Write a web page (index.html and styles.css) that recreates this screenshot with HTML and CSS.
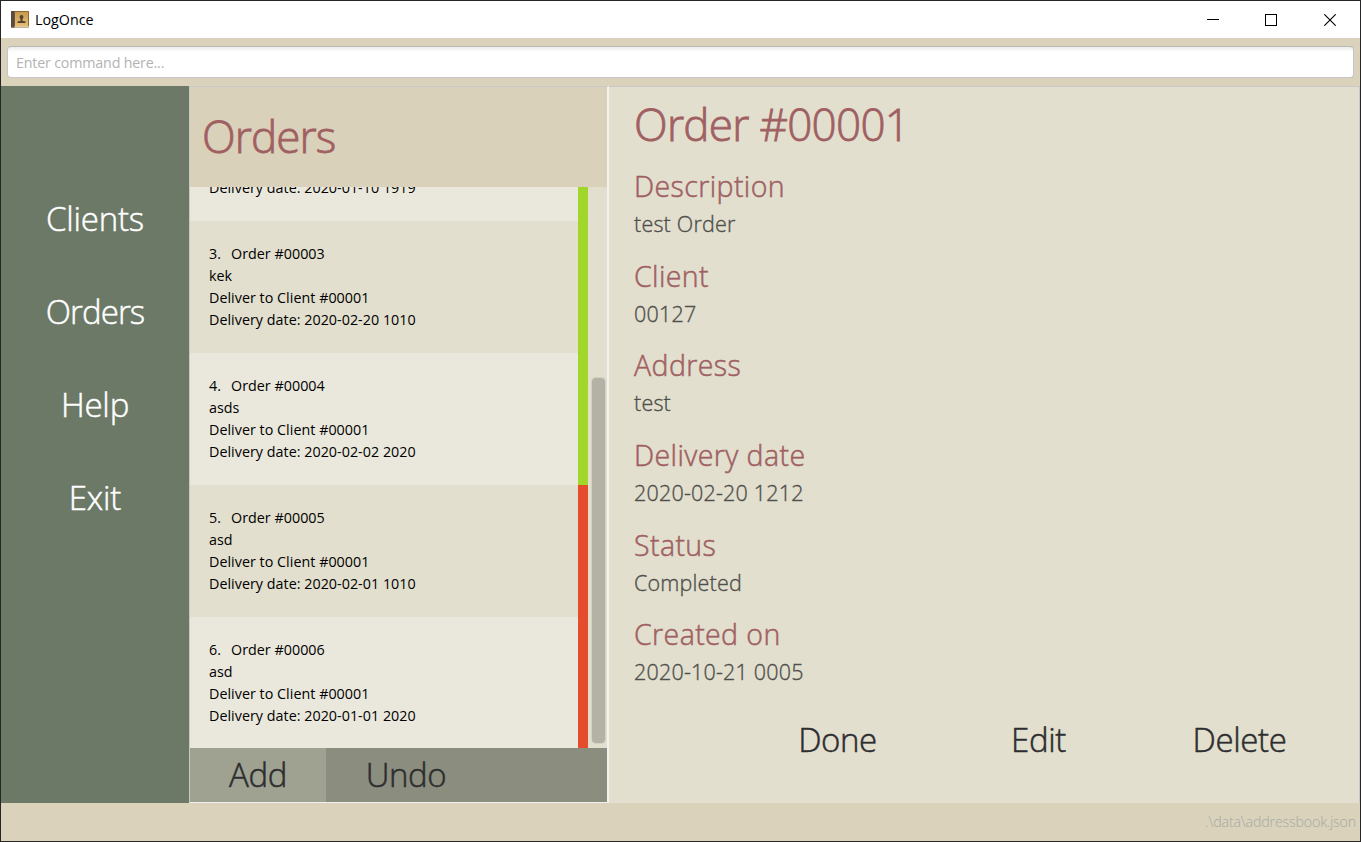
FILE: index.html
```
<!DOCTYPE html>
<html lang="en">
<head>
<meta charset="utf-8">
<title>LogOnce</title>
<link rel="stylesheet" href="styles.css">
</head>
<body>
<div class="window">
  <header class="titlebar">
    <svg class="app-icon" viewBox="0 0 18 17">
      <defs><linearGradient id="cover" x1="0" y1="0" x2="0" y2="1"><stop offset="0" stop-color="#c99a4d"/><stop offset="1" stop-color="#e6bd74"/></linearGradient></defs>
      <rect x="0" y="0" width="18" height="16.5" rx=".6" fill="#8e6832"/>
      <rect x="0" y="0" width="3.6" height="16.5" fill="#5a4a44"/>
      <rect x="4" y="1" width="13" height="14" fill="url(#cover)"/>
      <rect x="3.6" y="15.2" width="14.4" height=".8" fill="#efe0bd"/>
      <path d="M10.5 4a1.900 1.900 0 0 1 1.900 2c0 1-.8 1.500-.9 2.200v1.500l3 .8v1.500h-8v-1.500l3-.8v-1.500c-.1-.7-.9-1.200-.9-2.200A1.900 1.900 0 0 1 10.500 4z" fill="#554331"/>
    </svg>
    <span class="app-name">LogOnce</span>
    <div class="controls">
      <svg viewBox="0 0 12 12"><path d="M0 5.500H12" /></svg>
      <svg viewBox="0 0 12 12"><path d="M.5 .5H11.500V11.500H.5z"/></svg>
      <svg class="smooth" viewBox="0 0 12 12"><path d="M.3 .3L11.700 11.700M11.700 .3L.3 11.700"/></svg>
    </div>
  </header>
  <div class="command"><input class="command-input" type="text" placeholder="Enter command here..."></div>
  <main class="body">
    <nav class="sidebar">
      <a class="nav-item">Clients</a>
      <a class="nav-item orders-link">Orders</a>
      <a class="nav-item">Help</a>
      <a class="nav-item">Exit</a>
    </nav>
    <section class="list-panel">
      <h1 class="list-title">Orders</h1>
      <div class="list-view">
        <ul class="orders">
          <li class="order done partial"><p>Delivery date: 2020-01-10 1919</p></li>
          <li class="order done"><p><span class="num">3.</span>Order #00003</p><p>kek</p><p>Deliver to Client #00001</p><p>Delivery date: 2020-02-20 1010</p></li>
          <li class="order done"><p><span class="num">4.</span>Order #00004</p><p>asds</p><p>Deliver to Client #00001</p><p>Delivery date: 2020-02-02 2020</p></li>
          <li class="order late"><p><span class="num">5.</span>Order #00005</p><p>asd</p><p>Deliver to Client #00001</p><p>Delivery date: 2020-02-01 1010</p></li>
          <li class="order late"><p><span class="num">6.</span>Order #00006</p><p>asd</p><p>Deliver to Client #00001</p><p>Delivery date: 2020-01-01 2020</p></li>
        </ul>
        <div class="scrollbar"><div class="thumb"></div></div>
      </div>
      <div class="list-actions"><button class="btn add">Add</button><button class="btn undo">Undo</button></div>
    </section>
    <section class="detail">
      <h2 class="detail-title">Order #00001</h2>
      <dl class="fields">
        <div class="field"><dt>Description</dt><dd>test Order</dd></div>
        <div class="field"><dt>Client</dt><dd>00127</dd></div>
        <div class="field"><dt>Address</dt><dd>test</dd></div>
        <div class="field"><dt>Delivery date</dt><dd>2020-02-20 1212</dd></div>
        <div class="field"><dt>Status</dt><dd>Completed</dd></div>
        <div class="field"><dt>Created on</dt><dd>2020-10-21 0005</dd></div>
      </dl>
      <div class="detail-actions"><button class="btn">Done</button><button class="btn">Edit</button><button class="btn">Delete</button></div>
    </section>
  </main>
  <footer class="status">.\data\addressbook.json</footer>
</div>
</body>
</html>
```

FILE: styles.css
```
* { box-sizing: border-box; margin: 0; padding: 0; }
body { font-family: "Open Sans", "Noto Sans", sans-serif; overflow: hidden; }
.window { width: 1361px; height: 842px; border: 1px solid #262628; display: flex; flex-direction: column; background: #dad2ba; }
.titlebar { height: 37px; background: #fff; display: flex; align-items: center; padding-left: 10px; flex: none; }
.app-icon { width: 18px; height: 17px; }
.app-name { margin-left: 6px; font-size: 14.3px; letter-spacing: 0; color: #000; }
.controls { margin-left: auto; display: flex; padding-right: 24px; }
.controls svg { width: 12px; height: 12px; margin-left: 46px; fill: none; stroke: #000; stroke-width: 1; shape-rendering: crispEdges; }
.controls .smooth { margin-left: 47px; shape-rendering: auto; stroke-width: 1.1; }
.command { height: 48px; padding: 8px 6px 8px; flex: none; }
.command-input { display: block; width: 100%; height: 32px; border: 1px solid #c6c6c6; border-top-color: #b9b9b9; border-radius: 4px; background: linear-gradient(#ececec, #fff 5px); padding: 0 8px 0 8px; font: 14.3px "Open Sans", sans-serif; letter-spacing: -.2px; outline: 0; }
.command-input::placeholder { color: #b3b3b3; }
.body { display: flex; height: 717px; flex: none; }
.sidebar { width: 188px; background: #6c7967; display: flex; flex-direction: column; align-items: center; padding-top: 86px; flex: none; }
.nav-item { height: 93px; line-height: 93px; font-size: 33px; font-weight: 300; letter-spacing: -.2px; color: #fff; -webkit-text-stroke: .45px; }
.orders-link { letter-spacing: -.9px; }
.list-panel { width: 420px; border: 1px solid #c8c8c8; border-right: 2px solid #f2f2f2; border-bottom-color: #f0f0f0; display: flex; flex-direction: column; flex: none; background: #e2dfce; }
.list-title { height: 100px; line-height: 99px; padding-left: 12px; background: #dad1ba; color: #a06062; font-size: 44px; font-weight: 300; letter-spacing: -.9px; -webkit-text-stroke: .8px; flex: none; }
.list-view { height: 561px; overflow: hidden; display: flex; flex: none; }
.orders { list-style: none; width: 398px; margin-top: -10px; }
.order { height: 132px; padding: 22px 19px; background: #eae8dc; border-right: 10px solid; font-size: 14.3px; line-height: 22px; color: #000; letter-spacing: .03px; }
.order.partial { height: 44px; padding-top: 0; }
.order:nth-child(even) { background: #e2dfce; }
.order.done { border-right-color: #a1d62b; }
.order.late { border-right-color: #e54c2e; }
.num { display: inline-block; width: 22px; }
.scrollbar { flex: 1; padding: 191px 2px 0 4px; }
.thumb { height: 365px; width: 13px; background: #b4b1a5; border-radius: 4px; box-shadow: 0 0 0 1px #d4d1c1; }
.list-actions { flex: 1; display: flex; background: #8b8e7e; }
.btn { border: 0; background: none; font: 300 33px "Open Sans", sans-serif; letter-spacing: -.4px; color: #2d2d30; -webkit-text-stroke: .5px; }
.list-actions .btn { line-height: 54px; }
.add { width: 136px; }
.list-actions .add { background: #9fa290; }
.undo { width: 160px; }
.detail { flex: 1; border-top: 1px solid #c8c8c8; border-right: 1px solid #c8c8c8; background: #e2dfce; padding-left: 25px; display: flex; flex-direction: column; }
.detail-title { height: 78px; line-height: 75px; font-size: 44px; font-weight: 300; letter-spacing: -.7px; color: #a06062; -webkit-text-stroke: .8px; }
.fields { height: 539px; flex: none; }
.field { height: 89.7px; }
dt { height: 43px; line-height: 43px; font-size: 28.500px; font-weight: 300; letter-spacing: .4px; color: #a06062; -webkit-text-stroke: .5px; }
dd { height: 32px; line-height: 32px; font-size: 21.500px; font-weight: 300; letter-spacing: .2px; color: #4f4f4c; -webkit-text-stroke: .35px; }
.detail-actions { display: grid; grid-template-columns: repeat(3, 201px); padding-left: 103px; }
.detail-actions .btn { line-height: 72px; }
.status { flex: 1; display: flex; justify-content: flex-end; align-items: center; padding: 0 4px 2px 0; font-size: 14.3px; font-weight: 300; letter-spacing: -.2px; color: #a5aaa5; }
```
